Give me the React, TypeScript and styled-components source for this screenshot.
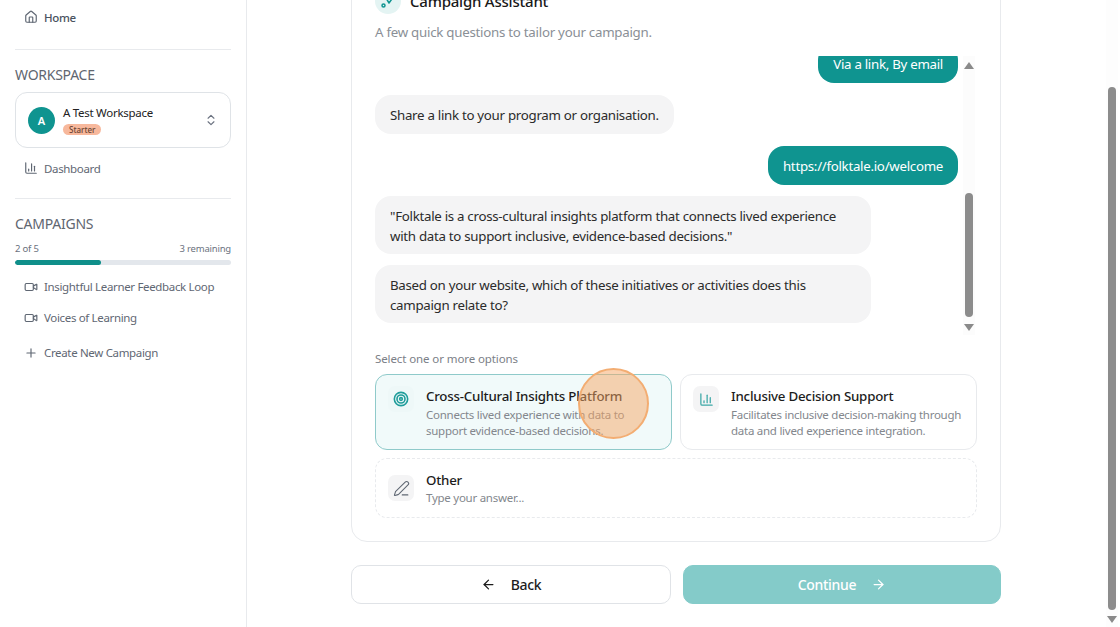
import React from 'react';
import styled, { createGlobalStyle } from 'styled-components';
import { Home, ChartColumn, ChevronsUpDown, Video, Plus, ArrowLeft, ArrowRight, Target, PenLine } from 'lucide-react';

const Global = createGlobalStyle`
  html, body { margin: 0; padding: 0; height: 100%; background: #fff; overflow: hidden; }
  #root { height: 100%; }
  * { box-sizing: border-box; }
  body { font-family: "Noto Sans", "Open Sans", sans-serif; color: #1a1a1a; }
`;

const Page = styled.div`
  display: flex;
  width: 1120px;
  height: 627px;
  overflow: hidden;
`;

const Sidebar = styled.aside`
  width: 247px;
  flex: none;
  border-right: 1px solid #e8eaed;
  padding: 0 15px;
  display: flex;
  flex-direction: column;
`;

const NavRow = styled.div<{ $strong?: boolean; $h?: number }>`
  display: flex;
  align-items: center;
  gap: 6px;
  height: ${p => p.$h ?? 31}px;
  padding-left: 9px;
  padding-bottom: 2px;
  font-size: 11.5px;
  letter-spacing: -0.34px;
  white-space: nowrap;
  font-weight: ${p => (p.$strong ? 500 : 400)};
  color: ${p => (p.$strong ? '#4a5360' : '#5f6773')};
  svg { flex: none; color: #5f6773; }
`;

const Divider = styled.hr<{ $mt: number; $mb: number }>`
  border: 0;
  border-top: 1px solid #e8eaed;
  margin: ${p => p.$mt}px 0 ${p => p.$mb}px;
`;

const SectionTitle = styled.div`
  font-size: 14px;
  line-height: 19px;
  letter-spacing: -0.25px;
  color: #5f6670;
`;

const WorkspaceCard = styled.div`
  margin-top: 8px;
  height: 56px;
  border: 1px solid #dfe3e7;
  border-radius: 12px;
  display: flex;
  align-items: center;
  padding: 0 12px 0 12px;
  gap: 8px;
`;

const Avatar = styled.div`
  width: 27px;
  height: 27px;
  border-radius: 50%;
  background: #0f9490;
  color: #fff;
  font-size: 11px;
  font-weight: 600;
  display: flex;
  align-items: center;
  justify-content: center;
  flex: none;
`;

const WorkspaceText = styled.div`
  flex: 1;
  display: flex;
  flex-direction: column;
  align-items: flex-start;
  gap: 3px;
  font-size: 11.5px;
  letter-spacing: -0.28px;
  line-height: 16px;
  color: #222;
`;

const Badge = styled.span`
  background: #f7b89c;
  color: #6b4433;
  font-size: 8px;
  letter-spacing: 0;
  font-weight: 500;
  line-height: 11px;
  padding: 0 6px;
  border-radius: 6px;
`;

const Progress = styled.div`
  display: flex;
  justify-content: space-between;
  font-size: 9.5px;
  letter-spacing: -0.2px;
  line-height: 14px;
  color: #6b7280;
  margin-top: 9px;
`;

const Track = styled.div`
  height: 5px;
  border-radius: 3px;
  background: #e3e7ec;
  margin: 4px 0 7px;
  overflow: hidden;
`;

const Fill = styled.div`
  height: 100%;
  border-radius: 3px;
  background: #0f8f8a;
`;

const Main = styled.main`
  flex: 1;
  min-width: 0;
  display: flex;
  padding-left: 104px;
  padding-right: 7px;
  position: relative;
`;

const Column = styled.div`
  width: 650px;
  flex: none;
  margin-top: -29px;
  display: flex;
  flex-direction: column;
`;

const Card = styled.section`
  height: 571px;
  flex: none;
  border: 1px solid #e8eaed;
  border-radius: 16px;
  padding: 16px 23px 0 23px;
  display: flex;
  flex-direction: column;
`;

const Header = styled.div`
  display: flex;
  align-items: center;
  gap: 9px;
  height: 26px;
  font-size: 15px;
  font-weight: 500;
  letter-spacing: -0.22px;
  color: #1a1a1a;
`;

const HeaderIcon = styled.div`
  width: 26px;
  height: 26px;
  border-radius: 50%;
  background: #e4f4f3;
  display: flex;
  align-items: center;
  justify-content: center;
`;

const Sub = styled.p`
  margin: 8px 0 0;
  font-size: 13.3px;
  letter-spacing: -0.26px;
  line-height: 20px;
  color: #8a8f96;
`;

const ChatWrap = styled.div`
  margin-top: 14px;
  height: 279px;
  display: flex;
  gap: 5px;
  padding-right: 2px;
`;

const ChatScroll = styled.div`
  flex: 1;
  min-width: 0;
  overflow: hidden;
  display: flex;
  flex-direction: column;
  gap: 12px;
`;

const Bubble = styled.div<{ $me?: boolean; $top?: boolean; $multi?: boolean }>`
  align-self: ${p => (p.$me ? 'flex-end' : 'flex-start')};
  background: ${p => (p.$me ? '#0f9490' : '#f4f4f5')};
  color: ${p => (p.$me ? '#fff' : '#2b2b2b')};
  border-radius: 16px;
  padding: 10px 15px ${p => (p.$multi ? 8 : 9)}px;
  font-size: 13.3px;
  letter-spacing: -0.29px;
  line-height: 20px;
  max-width: 496px;
  flex: none;
  ${p => p.$multi && 'margin-top: -1px;'}
  ${p => p.$top && 'margin-top: -12px;'}
`;

const ScrollBar = styled.div`
  position: relative;
  width: 12px;
  flex: none;
  background: #fcfcfc;
`;

const Arrow = styled.div<{ $dir: 'up' | 'down' }>`
  position: absolute;
  left: 50%;
  margin-left: -5px;
  ${p => (p.$dir === 'up' ? 'top: 6px;' : 'bottom: 4px;')}
  width: 0;
  height: 0;
  border-left: 5px solid transparent;
  border-right: 5px solid transparent;
  ${p => (p.$dir === 'up' ? 'border-bottom: 7px solid #8a8a8a;' : 'border-top: 7px solid #8a8a8a;')}
`;

const Thumb = styled.div`
  position: absolute;
  left: 2px;
  width: 8px;
  border-radius: 4px;
  background: #8c8c8c;
`;

const OptionsLabel = styled.div`
  margin-top: 16px;
  font-size: 11.5px;
  letter-spacing: -0.1px;
  line-height: 16px;
  color: #7b8087;
`;

const Options = styled.div`
  margin-top: 7px;
  display: grid;
  grid-template-columns: 297px 297px;
  column-gap: 8px;
  row-gap: 8px;
`;

const Option = styled.div<{ $selected?: boolean; $other?: boolean }>`
  grid-column: ${p => (p.$other ? '1 / -1' : 'auto')};
  height: ${p => (p.$other ? 60 : 76)}px;
  border: 1px ${p => (p.$other ? 'dashed' : 'solid')} ${p => (p.$selected ? '#8fcaca' : '#e8eaed')};
  border-radius: 12px;
  background: ${p => (p.$selected ? '#f1fafa' : '#fff')};
  padding: ${p => (p.$other ? '0' : '11px')} 12px 0;
  display: flex;
  gap: 12px;
  align-items: ${p => (p.$other ? 'center' : 'flex-start')};
`;

const OptionIcon = styled.div<{ $selected?: boolean }>`
  width: 26px;
  height: 26px;
  flex: none;
  border-radius: 7px;
  background: ${p => (p.$selected ? '#eef8f8' : '#f4f4f5')};
  display: flex;
  align-items: center;
  justify-content: center;
`;

const OptionTitle = styled.div`
  font-size: 13.3px;
  letter-spacing: -0.22px;
  line-height: 20px;
  font-weight: 500;
  color: #1c1c1c;
`;

const OptionDesc = styled.div<{ $gap?: boolean }>`
  font-size: 11.5px;
  letter-spacing: -0.26px;
  line-height: 15.5px;
  margin-top: ${p => (p.$gap ? 1 : 0)}px;
  color: #83878d;
`;

const Buttons = styled.div`
  margin-top: 23px;
  display: flex;
  gap: 12px;
`;

const Btn = styled.div<{ $primary?: boolean }>`
  flex: ${p => (p.$primary ? '1' : '0 0 320px')};
  height: 39px;
  border-radius: 10px;
  border: 1px solid ${p => (p.$primary ? '#84cbc9' : '#e0e3e7')};
  background: ${p => (p.$primary ? '#84cbc9' : '#fff')};
  color: ${p => (p.$primary ? '#fff' : '#1c1c1c')};
  font-size: 14px;
  letter-spacing: -0.3px;
  font-weight: 500;
  display: flex;
  align-items: center;
  justify-content: center;
  gap: 15px;
`;

const MainBar = styled(ScrollBar)`
  position: absolute;
  right: 2px;
  top: 0;
  bottom: 0;
  background: #fdfdfd;
`;

const Cursor = styled.div`
  position: absolute;
  left: 331px;
  top: 368px;
  width: 71px;
  height: 71px;
  border-radius: 50%;
  background: rgba(245, 166, 100, 0.5);
  border: 2px solid #f3ad72;
  pointer-events: none;
`;

export default function App() {
  return (
    <Page>
      <Global />
      <Sidebar>
        <NavRow $strong $h={36}><Home size={14} />Home</NavRow>
        <Divider $mt={13} $mb={15} />
        <SectionTitle>WORKSPACE</SectionTitle>
        <WorkspaceCard>
          <Avatar>A</Avatar>
          <WorkspaceText>
            A Test Workspace
            <Badge>Starter</Badge>
          </WorkspaceText>
          <ChevronsUpDown size={14} color="#6b7280" />
        </WorkspaceCard>
        <NavRow $h={42}><ChartColumn size={14} />Dashboard</NavRow>
        <Divider $mt={8} $mb={15} />
        <SectionTitle>CAMPAIGNS</SectionTitle>
        <Progress><span>2 of 5</span><span>3 remaining</span></Progress>
        <Track><Fill style={{ width: '40%' }} /></Track>
        <NavRow><Video size={14} />Insightful Learner Feedback Loop</NavRow>
        <NavRow><Video size={14} />Voices of Learning</NavRow>
        <NavRow $h={39}><Plus size={14} />Create New Campaign</NavRow>
      </Sidebar>
      <Main>
        <Column>
          <Card>
            <Header>
              <HeaderIcon>
                <svg width="16" height="16" viewBox="0 0 16 16" fill="none" stroke="#0f9490" strokeWidth="1.5" strokeLinecap="round" strokeLinejoin="round">
                  <path d="M2 2l4 3 3 5 5-7" />
                  <circle cx="3.5" cy="12.5" r="1.5" />
                </svg>
              </HeaderIcon>
              Campaign Assistant
            </Header>
            <Sub>A few quick questions to tailor your campaign.</Sub>
            <ChatWrap>
              <ChatScroll>
                <Bubble $me $top>Via a link, By email</Bubble>
                <Bubble>Share a link to your program or organisation.</Bubble>
                <Bubble $me>https://folktale.io/welcome</Bubble>
                <Bubble $multi>"Folktale is a cross-cultural insights platform that connects lived experience with data to support inclusive, evidence-based decisions."</Bubble>
                <Bubble $multi>Based on your website, which of these initiatives or activities does this campaign relate to?</Bubble>
              </ChatScroll>
              <ScrollBar>
                <Arrow $dir="up" />
                <Thumb style={{ top: 137, height: 124 }} />
                <Arrow $dir="down" />
              </ScrollBar>
            </ChatWrap>
            <OptionsLabel>Select one or more options</OptionsLabel>
            <Options>
              <Option $selected>
                <OptionIcon $selected><Target size={16} strokeWidth={2.4} color="#1f9d9b" /></OptionIcon>
                <div>
                  <OptionTitle>Cross-Cultural Insights Platform</OptionTitle>
                  <OptionDesc $gap>Connects lived experience with data to support evidence-based decisions.</OptionDesc>
                </div>
              </Option>
              <Option>
                <OptionIcon><ChartColumn size={15} color="#3ba7a6" /></OptionIcon>
                <div>
                  <OptionTitle>Inclusive Decision Support</OptionTitle>
                  <OptionDesc $gap>Facilitates inclusive decision-making through data and lived experience integration.</OptionDesc>
                </div>
              </Option>
              <Option $other>
                <OptionIcon><PenLine size={17} strokeWidth={1.5} color="#5f6773" /></OptionIcon>
                <div>
                  <OptionTitle>Other</OptionTitle>
                  <OptionDesc>Type your answer...</OptionDesc>
                </div>
              </Option>
            </Options>
          </Card>
          <Buttons>
            <Btn><ArrowLeft size={15} />Back</Btn>
            <Btn $primary>Continue<ArrowRight size={15} /></Btn>
          </Buttons>
        </Column>
        <MainBar>
          <Thumb style={{ top: 87, height: 523 }} />
          <Arrow $dir="down" />
        </MainBar>
        <Cursor />
      </Main>
    </Page>
  );
}
